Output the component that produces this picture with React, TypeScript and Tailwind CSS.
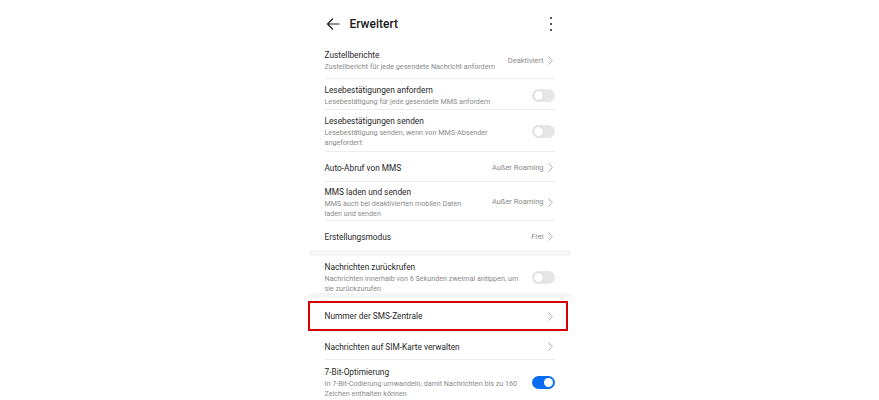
import React from "react";

const Chevron = () => (
  <svg width="5" height="9" viewBox="0 0 5 9" className="shrink-0 mr-[2px]">
    <polyline points="0.7,0.7 4.3,4.5 0.7,8.3" fill="none" stroke="#a3a3a3" strokeWidth="0.9" strokeLinecap="round" strokeLinejoin="round" />
  </svg>
);

const Toggle = ({ on = false }: { on?: boolean }) => (
  <div
    className={
      on
        ? "w-[23px] h-[13px] rounded-full bg-[#0a6cf5] flex items-center justify-end px-[2px] shrink-0"
        : "w-[23px] h-[13px] rounded-full bg-[#e6e6e6] flex items-center justify-start px-[1px] shrink-0"
    }
  >
    <div
      className={
        on
          ? "w-[9px] h-[9px] rounded-full bg-white"
          : "w-[11px] h-[11px] rounded-full bg-white border border-[#d8d8d8]"
      }
    />
  </div>
);

interface RowProps {
  title: string;
  sub?: string;
  value?: string;
  chevron?: boolean;
  toggle?: "on" | "off";
  h: string;
  pt?: string;
  divider?: boolean;
}

const Row = ({ title, sub, value, chevron, toggle, h, pt = "pt-[2px]", divider = true }: RowProps) => (
  <div className={`${h} ${pt} flex items-center gap-3 ${divider ? "border-b border-[#ededed]" : ""}`}>
    <div className="flex-1 min-w-0">
      <div className="text-[8.3px] leading-[12px] text-[#1f1f1f]">{title}</div>
      {sub && <div className="mt-[1px] text-[7.2px] leading-[10px] text-[#8a8a8a]">{sub}</div>}
    </div>
    {(value || chevron) && (
      <div className="flex items-center gap-[4px] shrink-0">
        {value && <span className="text-[7.5px] text-[#8a8a8a]">{value}</span>}
        {chevron && <Chevron />}
      </div>
    )}
    {toggle && <Toggle on={toggle === "on"} />}
  </div>
);

export default function App() {
  return (
    <div className="w-[879px] h-[400px] bg-white overflow-hidden flex items-start justify-center font-['Roboto',sans-serif]">
      <div className="w-[260px] flex flex-col">
        {/* header */}
        <div className="h-[41px] pt-[7px] px-[15px] flex items-center">
          <svg width="14" height="12" viewBox="0 0 14 12" className="ml-[1px]">
            <path d="M13 6H1.5M6.5 1L1.5 6l5 5" fill="none" stroke="#222" strokeWidth="1.2" strokeLinecap="round" strokeLinejoin="round" />
          </svg>
          <span className="ml-[10px] text-[12px] font-medium text-[#1a1a1a]">Erweitert</span>
          <div className="ml-auto mr-[3px] flex flex-col gap-[4px]">
            <span className="w-[2px] h-[2px] bg-[#222] rounded-full" />
            <span className="w-[2px] h-[2px] bg-[#222] rounded-full" />
            <span className="w-[2px] h-[2px] bg-[#222] rounded-full" />
          </div>
        </div>

        <div className="px-[15px]">
          <Row h="h-[38px]" title="Zustellberichte" sub="Zustellbericht für jede gesendete Nachricht anfordern" value="Deaktiviert" chevron />
          <Row h="h-[31px]" title="Lesebestätigungen anfordern" sub="Lesebestätigung für jede gesendete MMS anfordern" toggle="off" />
          <Row h="h-[42px]" title="Lesebestätigungen senden" sub="Lesebestätigung senden, wenn von MMS-Absender angefordert" toggle="off" />
          <Row h="h-[30px]" title="Auto-Abruf von MMS" value="Außer Roaming" chevron />
          <Row h="h-[39px]" title="MMS laden und senden" sub="MMS auch bei deaktivierten mobilen Daten laden und senden" value="Außer Roaming" chevron />
          <Row h="h-[29px]" title="Erstellungsmodus" value="Frei" chevron divider={false} />
        </div>

        <div className="h-[6px] bg-[#f5f5f5]" />

        <div className="px-[15px]">
          <Row h="h-[37px]" pt="pt-[6px]" title="Nachrichten zurückrufen" sub="Nachrichten innerhalb von 6 Sekunden zweimal antippen, um sie zurückzurufen" toggle="off" divider={false} />
        </div>

        <div className="h-[5px] bg-[#f5f5f5]" />

        <div className="relative px-[15px]">
          <Row h="h-[34px]" title="Nummer der SMS-Zentrale" chevron divider={false} />
          <div className="absolute left-[-2px] right-[2px] top-[3px] h-[30px] border-2 border-[#d40000]" />
        </div>

        <div className="px-[15px]">
          <Row h="h-[28px]" title="Nachrichten auf SIM-Karte verwalten" chevron />
          <Row h="h-[42px]" title="7-Bit-Optimierung" sub="In 7-Bit-Codierung umwandeln, damit Nachrichten bis zu 160 Zeichen enthalten können" toggle="on" divider={false} />
        </div>
      </div>
    </div>
  );
}
